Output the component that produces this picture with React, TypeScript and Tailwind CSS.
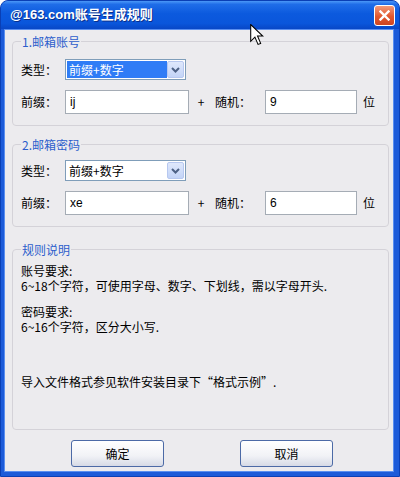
import React from "react";

const cjk = "font-['SimSun','Noto_Sans_CJK_SC',sans-serif]";

function DropArrow() {
  return (
    <div className="w-[17px] h-[17px] mr-[1px] rounded-[2px] border border-[#b7c8f0] bg-[linear-gradient(to_bottom,#dfe8fc,#c3d4f7)] flex items-center justify-center">
      <svg width="9" height="6" viewBox="0 0 9 6">
        <path d="M1 1 L4.5 4.5 L8 1" fill="none" stroke="#4d6185" strokeWidth="2" />
      </svg>
    </div>
  );
}

function Select({ selected }: { selected?: boolean }) {
  return (
    <div className="w-[121px] h-[21px] border border-[#7f9db9] bg-white flex items-center pl-[1px]">
      <div
        className={
          "flex-1 h-[17px] flex items-center pl-[2px] text-[12px] " +
          (selected ? "bg-[#2f7cf6] text-white" : "text-black")
        }
      >
        前缀+数字
      </div>
      <DropArrow />
    </div>
  );
}

function TextBox({ value, w }: { value: string; w: string }) {
  return (
    <div className={"h-[24px] border border-[#a5acb5] bg-white flex items-center pl-[4px] text-[12px] font-['Liberation_Sans',sans-serif] " + w}>
      {value}
    </div>
  );
}

function Group({ title, sel, prefix, rnd, pt }: { title: string; sel?: boolean; prefix: string; rnd: string; pt: string }) {
  return (
    <fieldset className={"border border-[#d4d2d8] rounded-[4px] px-[8px] pb-[11px] " + pt}>
      <legend className="px-[1px] text-[12px] leading-[13px] text-[#2c5ecc]">{title}</legend>
      <div className="flex items-center h-[21px]">
        <span className="w-[44px] text-[12px]">类型：</span>
        <Select selected={sel} />
      </div>
      <div className="flex items-center h-[24px] mt-[10px] text-[12px]">
        <span className="w-[44px]">前缀：</span>
        <TextBox value={prefix} w="w-[124px]" />
        <span className="w-[24px] text-center">+</span>
        <span className="w-[52px] pl-[2px]">随机：</span>
        <TextBox value={rnd} w="w-[92px]" />
        <span className="ml-[6px]">位</span>
      </div>
    </fieldset>
  );
}

function Button({ label }: { label: string }) {
  return (
    <button className="w-[93px] h-[27px] rounded-[3px] border border-[#4c6aa6] bg-[linear-gradient(to_bottom,#ffffff,#f1f2f6_60%,#d6dae6)] text-[12px] text-black">
      {label}
    </button>
  );
}

export default function App() {
  return (
    <div className={"relative w-[400px] h-[477px] rounded-t-[8px] overflow-hidden bg-[#1c5bd9] border border-[#0a3fb5] flex flex-col " + cjk}>
      {/* title bar */}
      <div className="h-[28px] shrink-0 flex items-center justify-between pl-[9px] pr-[4px] bg-[linear-gradient(to_bottom,#4b98f7_0%,#1f6de8_12%,#0c5ade_45%,#0a56db_80%,#0847c6_100%)]">
        <span className="text-white font-bold text-[13px] font-['Liberation_Sans','Noto_Sans_CJK_SC',sans-serif] [text-shadow:1px_1px_0_#0a2f8a]">
          @163.com账号生成规则
        </span>
        <div className="w-[21px] h-[21px] rounded-[3px] border border-white bg-[linear-gradient(to_bottom,#f29a7a,#e2582f_55%,#cf4520)] flex items-center justify-center">
          <svg width="11" height="11" viewBox="0 0 11 11">
            <path d="M1.5 1.5 L9.5 9.5 M9.5 1.5 L1.5 9.5" stroke="white" strokeWidth="2.4" strokeLinecap="square" />
          </svg>
        </div>
      </div>

      {/* body */}
      <div className="flex-1 ml-[3px] mr-[5px] mb-[4px] bg-[#ecebee] border border-[#5a8ff0] pl-[7px] pr-[4px] flex flex-col text-black">
        <div className="mt-[5px]">
          <Group title="1.邮箱账号" sel prefix="ij" rnd="9" pt="pt-[11px]" />
        </div>
        <div className="mt-[12px]">
          <Group title="2.邮箱密码" prefix="xe" rnd="6" pt="pt-[9px]" />
        </div>
        <fieldset className="mt-[16px] h-[187px] border border-[#d4d2d8] rounded-[4px] px-[8px] pt-[7px] text-[12px] leading-[15px]">
          <legend className="px-[1px] text-[12px] leading-[13px] text-[#2c5ecc]">规则说明</legend>
          <div>账号要求:</div>
          <div>6~18个字符，可使用字母、数字、下划线，需以字母开头.</div>
          <div className="mt-[11px]">密码要求:</div>
          <div>6~16个字符，区分大小写.</div>
          <div className="mt-[40px]">导入文件格式参见软件安装目录下“格式示例”.</div>
        </fieldset>
        <div className="mt-[10px] flex pl-[59px] gap-[76px]">
          <Button label="确定" />
          <Button label="取消" />
        </div>
      </div>

      {/* mouse pointer */}
      <svg className="absolute left-[249px] top-[23px]" width="14" height="22" viewBox="0 0 13 21">
        <path d="M0.5 0.5 L0.5 16.5 L4.5 12.5 L7.5 19.5 L10 18.5 L7 11.5 L12 11.5 Z" fill="white" stroke="black" strokeWidth="1" strokeLinejoin="miter" />
      </svg>
    </div>
  );
}
